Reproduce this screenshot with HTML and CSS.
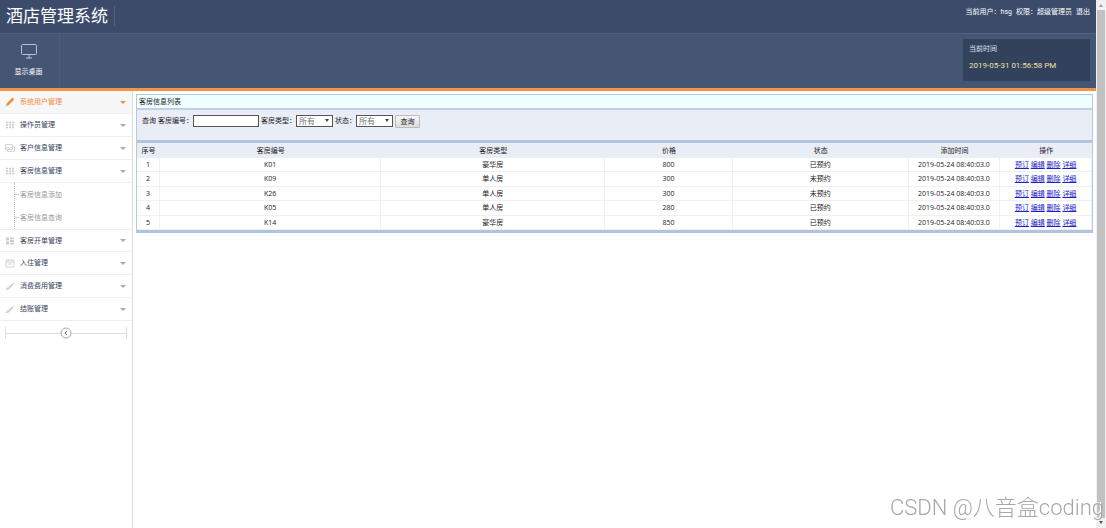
FILE: index.html
```html
<!DOCTYPE html>
<html lang="zh-CN">
<head>
<meta charset="utf-8">
<title>酒店管理系统</title>
<link rel="stylesheet" href="styles.css">
</head>
<body>
<svg class="defs" aria-hidden="true">
  <symbol id="pencil" viewBox="0 0 10 10"><path d="M1 9l.6-2.6L6.8 1.2Q7.6.4 8.5 1.3T8.8 3L3.5 8.3z" fill="currentColor"/></symbol>
  <symbol id="grid" viewBox="0 0 10 10"><path d="M1 2.5h2M4 2.5h2M7 2.5h2M1 5h2M4 5h2M7 5h2M1 7.5h2M4 7.5h2M7 7.5h2" stroke="currentColor" stroke-width="1.4"/></symbol>
  <symbol id="images" viewBox="0 0 10 10"><path d="M.5 1.5h7v5h-7zM2.5 6.5v2h7v-5h-2M1 6l2-2 1.5 1.500L6 4l1.500 1.500" fill="none" stroke="currentColor" stroke-width=".8"/></symbol>
  <symbol id="list" viewBox="0 0 10 10"><path d="M1 1.500h3v3H1zM1 5.500h3v3H1zM5 1.500h4v1.800H5zM5 4.100h4v1.800H5zM5 6.700h4v1.800H5z" fill="currentColor"/></symbol>
  <symbol id="calendar" viewBox="0 0 10 10"><path d="M1 2h8v7H1zM1 4h8M3 1v2M7 1v2M3 6h4" fill="none" stroke="currentColor" stroke-width=".8"/></symbol>
  <symbol id="brush" viewBox="0 0 10 10"><path d="M9.800 1L5.500 7.200 3.500 5.400zM3 5.800l2 1.800Q3 9.800.3 8.500 2 8 3 5.800z" fill="currentColor"/></symbol>
</svg>
<div class="app">
  <div class="frame">
    <header class="header">
      <div class="topbar">
        <h1 class="brand">酒店管理系统</h1>
        <div class="account"><span>当前用户：hsg</span><span>权限：超级管理员</span><a href="#">退出</a></div>
      </div>
      <div class="toolbar">
        <button class="desktop" type="button">
          <svg class="monitor" viewBox="0 0 16 15" fill="none" stroke="currentColor"><rect x=".5" y=".5" width="15" height="10" rx="1"/><path d="M8 11v3M5 14h6"/></svg>
          显示桌面
        </button>
        <div class="clock"><span>当前时间</span><time class="now">2019-05-31 01:56:58 PM</time></div>
      </div>
    </header>
    <div class="body">
      <nav class="sidebar">
        <a class="item active" href="#"><svg class="icon"><use href="#pencil"/></svg>系统用户管理</a>
        <a class="item" href="#"><svg class="icon"><use href="#grid"/></svg>操作员管理</a>
        <a class="item" href="#"><svg class="icon"><use href="#images"/></svg>客户信息管理</a>
        <a class="item" href="#"><svg class="icon"><use href="#grid"/></svg>客房信息管理</a>
        <div class="submenu">
          <a class="subitem" href="#">客房信息添加</a>
          <a class="subitem" href="#">客房信息查询</a>
        </div>
        <a class="item" href="#"><svg class="icon"><use href="#list"/></svg>客房开单管理</a>
        <a class="item" href="#"><svg class="icon"><use href="#calendar"/></svg>入住管理</a>
        <a class="item" href="#"><svg class="icon"><use href="#brush"/></svg>消费费用管理</a>
        <a class="item" href="#"><svg class="icon"><use href="#brush"/></svg>结账管理</a>
        <div class="collapse">
          <button class="collapse-button" type="button" aria-label="收起"><svg viewBox="0 0 12 12" fill="none" stroke="currentColor"><circle cx="6" cy="6" r="5" fill="#fff"/><path d="M7 4L5 6l2 2" stroke="#666"/></svg></button>
        </div>
      </nav>
      <main class="main">
        <section class="panel">
          <h2 class="title">客房信息列表</h2>
          <form class="filter">
            <span>查询</span>
            <div class="group"><label for="room">客房编号：</label><input class="field" id="room" type="text"></div>
            <div class="group"><label for="type">客房类型：</label><span class="pick"><select class="select" id="type"><option>所有</option></select></span></div>
            <div class="group"><label for="state">状态：</label><span class="pick"><select class="select" id="state"><option>所有</option></select></span></div>
            <button class="search" type="button">查询</button>
          </form>
          <table class="rooms">
            <thead><tr><th class="c-no">序号</th><th class="c-room">客房编号</th><th class="c-type">客房类型</th><th class="c-price">价格</th><th class="c-state">状态</th><th class="c-time">添加时间</th><th class="c-ops">操作</th></tr></thead>
            <tbody>
              <tr><td>1</td><td>K01</td><td>豪华房</td><td>800</td><td>已预约</td><td>2019-05-24 08:40:03.0</td><td><a href="#">预订</a> <a href="#">编辑</a> <a href="#">删除</a> <a href="#">详细</a></td></tr>
              <tr><td>2</td><td>K09</td><td>单人房</td><td>300</td><td>未预约</td><td>2019-05-24 08:40:03.0</td><td><a href="#">预订</a> <a href="#">编辑</a> <a href="#">删除</a> <a href="#">详细</a></td></tr>
              <tr><td>3</td><td>K26</td><td>单人房</td><td>300</td><td>未预约</td><td>2019-05-24 08:40:03.0</td><td><a href="#">预订</a> <a href="#">编辑</a> <a href="#">删除</a> <a href="#">详细</a></td></tr>
              <tr><td>4</td><td>K05</td><td>单人房</td><td>280</td><td>已预约</td><td>2019-05-24 08:40:03.0</td><td><a href="#">预订</a> <a href="#">编辑</a> <a href="#">删除</a> <a href="#">详细</a></td></tr>
              <tr><td>5</td><td>K14</td><td>豪华房</td><td>850</td><td>已预约</td><td>2019-05-24 08:40:03.0</td><td><a href="#">预订</a> <a href="#">编辑</a> <a href="#">删除</a> <a href="#">详细</a></td></tr>
            </tbody>
          </table>
        </section>
      </main>
    </div>
  </div>
  <div class="scrollbar" aria-hidden="true"><i class="arrow up"></i><i class="thumb"></i><i class="arrow"></i></div>
</div>
<div class="watermark">CSDN @八音盒coding</div>
</body>
</html>
```
FILE: styles.css
```css
* { box-sizing: border-box; }
body {
  margin: 0;
  background: #fff;
  color: #222;
  font: 7px/10px "Open Sans", "Noto Sans CJK SC", sans-serif;
}
button, input, select { font: inherit; color: inherit; }
a { color: inherit; text-decoration: none; }
.defs { display: none; }
.app { display: flex; min-height: 100vh; }
.frame { flex: 1; display: flex; flex-direction: column; min-width: 0; }

.header { border-bottom: 3px solid #f0944a; color: #fff; }
.topbar {
  display: flex;
  justify-content: space-between;
  height: 33px;
  background: #3b4b69;
}
.brand {
  align-self: flex-start;
  margin: 6px 0 0;
  padding: 0 6px;
  border-right: 1px solid #50607d;
  font-size: 17px;
  line-height: 20px;
  font-weight: 400;
}
.account { display: flex; gap: 4px; padding: 7px 6px 0 0; font-family: Roboto, "Noto Sans CJK SC", sans-serif; }
.toolbar {
  display: flex;
  justify-content: space-between;
  height: 55px;
  background: #455674;
  border-top: 1px solid #50607d;
}
.desktop {
  display: flex;
  flex-direction: column;
  align-items: center;
  gap: 8px;
  width: 60px;
  padding: 10px 2px 0 0;
  border: 0;
  border-right: 1px solid #4d5e7c;
  background: none;
}
.monitor { width: 16px; height: 15px; color: #b9c2d2; }
.clock {
  display: flex;
  flex-direction: column;
  gap: 7px;
  width: 127px;
  height: 42px;
  margin: 5px 6px 0 0;
  padding: 5px 6px;
  border-radius: 1px;
  background: #32415c;
  color: #dfe4ec;
}
.now { color: #f0e2a8; font-family: Roboto, sans-serif; font-size: 8px; }

.body { flex: 1; display: flex; }
.sidebar { width: 133px; border-right: 1px solid #dcdcdc; background: #fff; }
.item {
  display: flex;
  align-items: center;
  gap: 5px;
  height: 23px;
  padding: 0 6px 0 5px;
  border-bottom: 1px solid #eee;
  color: #34435c;
}
.item::after {
  content: "";
  margin-left: auto;
  border: 3px solid transparent;
  border-top-color: #aaa;
  border-bottom: 0;
}
.icon { width: 10px; height: 10px; color: #ccc; }
.active, .active .icon { color: #ee8e40; }
.active { background: #f7f7f7; }
.active::after { border-top-color: #ee8e40; }
.submenu { margin-left: 14px; border-left: 1px dotted #bbb; }
.subitem { display: flex; align-items: center; gap: 1px; height: 23px; color: #999; }
.subitem::before { content: ""; width: 4px; border-top: 1px dotted #bbb; }
.submenu + .item { border-top: 1px solid #eee; }
.collapse {
  display: flex;
  justify-content: center;
  align-items: center;
  height: 12px;
  margin: 6px 5px;
  border: solid #ddd;
  border-width: 0 1px;
  background: linear-gradient(#ddd, #ddd) center / 100% 1px no-repeat;
}
.collapse-button { display: flex; width: 12px; height: 12px; padding: 0; border: 0; background: none; color: #aaa; }

.main { flex: 1; min-width: 0; padding: 3px 3px 0; }
.panel { border: 1px solid #b6c8de; border-bottom: 3px solid #b0c4de; }
.title {
  height: 15px;
  margin: 0;
  padding: 2px;
  border-bottom: 2px solid #c0cfe2;
  background: #f0ffff;
  font: inherit;
}
.filter {
  display: flex;
  align-items: flex-start;
  gap: 2px;
  height: 33px;
  padding: 5px 5px 0;
  border-bottom: 3px solid #b0c4de;
  background: #e9edf6;
  line-height: 12px;
}
.group { display: flex; }
.field { width: 66px; height: 12px; padding: 0 2px; border: 1px solid #555; background: #fff; }
.pick { position: relative; display: flex; }
.pick::after {
  content: "";
  position: absolute;
  right: 4px;
  top: 4px;
  border: 2px solid transparent;
  border-top: 3px solid #444;
  border-bottom: 0;
}
.select {
  appearance: none;
  width: 37px;
  height: 12px;
  padding: 0 2px;
  border: 1px solid #555;
  border-radius: 0;
  background: #fff;
  color: #777;
  font-size: 8px;
  line-height: 10px;
}
.search {
  width: 25px;
  height: 13px;
  padding: 0;
  border: 1px solid #bbb;
  border-radius: 1px;
  background: linear-gradient(#f6f6f6, #ddd);
  line-height: 10px;
}
.rooms { width: 100%; border-collapse: separate; border-spacing: 0; table-layout: fixed; text-align: center; }
.rooms th { height: 15px; padding: 0; background: #e9edf6; font-weight: 400; }
.rooms td { height: 14px; padding: 0; border: solid #f0f0f0; border-width: 0 1px 1px 0; }
.rooms tr:nth-child(even) td { height: 15px; }
.rooms a { color: #2020c8; text-decoration: underline; }
.c-no { width: 2.4%; }
.c-room { width: 23.2%; }
.c-type { width: 23.4%; }
.c-price { width: 13.4%; }
.c-state { width: 18.4%; }
.c-time { width: 9.6%; }
.c-ops { width: 9.6%; }

.scrollbar {
  display: flex;
  flex-direction: column;
  align-items: center;
  width: 10px;
  padding: 4px 0;
  gap: 3px;
  background: #f1f1f1;
}
.thumb { flex: 1; width: 8px; background: #c1c1c1; }
.arrow { border: 2px solid transparent; border-top: 3px solid #555; border-bottom: 0; }
.up { border-top: 0; border-bottom: 3px solid #999; }
.watermark {
  position: fixed;
  right: 2px;
  bottom: 7px;
  color: #a8a8a8;
  font: 300 22px/26px Roboto, "Noto Sans CJK SC", sans-serif;
  text-shadow: -1px -1px 0 #fff;
}
```
